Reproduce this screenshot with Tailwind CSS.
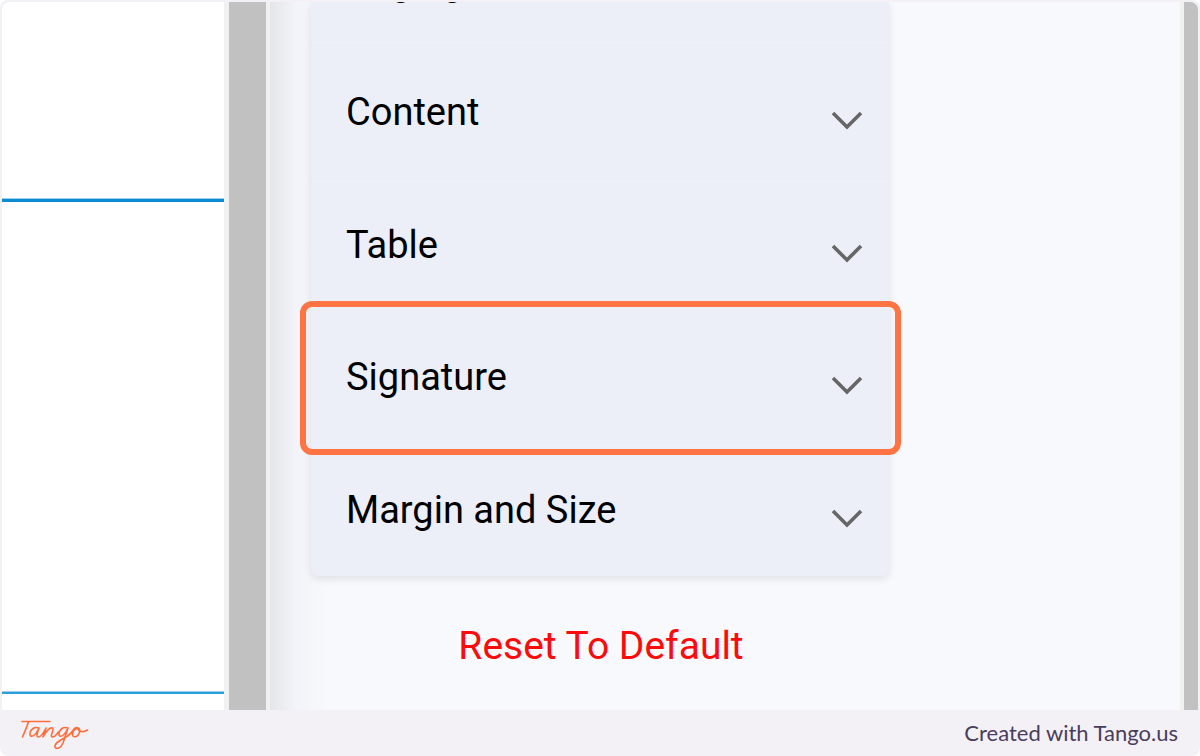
<!DOCTYPE html>
<html lang="en">
<head>
  <meta charset="UTF-8" />
  <meta name="viewport" content="width=device-width, initial-scale=1.0"/>
  <title>Signature settings</title>
  <script src="https://cdn.jsdelivr.net/npm/@tailwindcss/browser@4"></script>
</head>
<body class="bg-white">
  <div class="h-screen flex flex-col bg-[#f3f1f6] rounded-lg overflow-hidden font-[Roboto,sans-serif]">
    <main class="flex-1 min-h-0 flex mx-0.5 mt-0.5 rounded-t-lg overflow-hidden bg-[#f8f9fd]">

      <!-- document preview -->
      <section class="w-[222px] shrink-0 flex flex-col bg-white">
        <div class="h-[197px] border-b border-[#9fcdea]"></div>
        <div class="h-[3px] bg-[#0a8bd2]"></div>
        <div class="h-[490px] border-b border-[#9fcdea]"></div>
        <div class="h-0.5 bg-[#2a9ddb]"></div>
      </section>
      <div class="w-[46px] shrink-0 bg-[#c1c1c1] border-l-5 border-r-4 border-[#f1f1f1]"></div>

      <!-- settings panel -->
      <section class="flex-1 flex flex-col items-start pl-[41px] bg-linear-to-r from-[#e5e6ea] from-[1px] via-[#f3f4f9] via-[26px] to-[#f8f9fd] to-[60px]">
        <div class="w-[578px] bg-[#eceff8] rounded-b-lg shadow-[0_3px_8px_rgba(0,0,0,0.1)] text-[38px] leading-[44px] text-black">
          <button type="button" class="w-full h-11 flex items-end overflow-hidden border-b border-[#e9ecf3] px-[35px]">
            <span class="pb-[41px]">Paging</span>
          </button>
          <button type="button" class="w-full h-[133px] flex items-center justify-between border-b border-[#e9ecf3] pl-[35px] pr-[26px]">
            <span>Content</span>
            <svg class="w-8 h-5 mt-4" viewBox="0 0 32 20" fill="none" stroke="#666" stroke-width="3.600"><path d="M2 3 16 17 30 3"/></svg>
          </button>
          <button type="button" class="w-full h-[132px] flex items-center justify-between border-b border-[#e9ecf3] pl-[35px] pr-[26px]">
            <span>Table</span>
            <svg class="w-8 h-5 mt-4" viewBox="0 0 32 20" fill="none" stroke="#666" stroke-width="3.600"><path d="M2 3 16 17 30 3"/></svg>
          </button>
          <div class="relative">
            <button type="button" class="w-full h-[132px] flex items-center justify-between border-b border-[#e9ecf3] pl-[35px] pr-[26px]">
              <span>Signature</span>
              <svg class="w-8 h-5 mt-4" viewBox="0 0 32 20" fill="none" stroke="#666" stroke-width="3.600"><path d="M2 3 16 17 30 3"/></svg>
            </button>
            <div class="absolute -left-[11px] -right-3 -top-[10px] -bottom-3 border-6 border-[#ff7442] rounded-xl pointer-events-none"></div>
          </div>
          <button type="button" class="w-full h-[133px] flex items-center justify-between pl-[35px] pr-[26px]">
            <span>Margin and Size</span>
            <svg class="w-8 h-5 mt-4" viewBox="0 0 32 20" fill="none" stroke="#666" stroke-width="3.600"><path d="M2 3 16 17 30 3"/></svg>
          </button>
        </div>
        <div class="w-[580px] flex justify-center pt-12">
          <button type="button" class="text-[39px] leading-[44px] text-[#ff0a0a]">Reset To Default</button>
        </div>
      </section>
      <div class="w-[18px] shrink-0 bg-[#c1c1c1] border-l-4 border-[#f1f1f1]"></div>
    </main>

    <footer class="h-[46px] shrink-0 flex items-center justify-between pl-5 pr-[22px]">
      <a href="#" aria-label="Tango">
        <svg class="w-[70px] h-8" viewBox="0 0 70 32" fill="none" stroke="#ff6d3b" stroke-width="1.600" stroke-linecap="round" stroke-linejoin="round">
          <path d="M2 4.500H30M8.500 4.500C7 10 4.500 15 2.500 20M19 11C14 9 10 13 10 17C10 21 15 20 19 11C17 16 16 20 18.500 20C21 20 24 15 26 11L23 20C26 14 30 10 32.500 11C35 12 29 20 32.500 20C35 20 37 17 38.500 15M48 11C43 9 39 13 39 17C39 21 44 20 48 11L43 26C41 31 36 33 35 30C34 26 41 23 46 20C50 18 52 15 54 12C56 9 61 11 59.500 15C58 21 52 21 52.500 17C53 13 56 11 58 12C60 16 64 15 67.500 13"/>
        </svg>
      </a>
      <a href="#" class="font-[Lato,sans-serif] text-[22px] leading-7 text-[#4a3d5c]">Created with Tango.us</a>
    </footer>
  </div>
</body>
</html>
